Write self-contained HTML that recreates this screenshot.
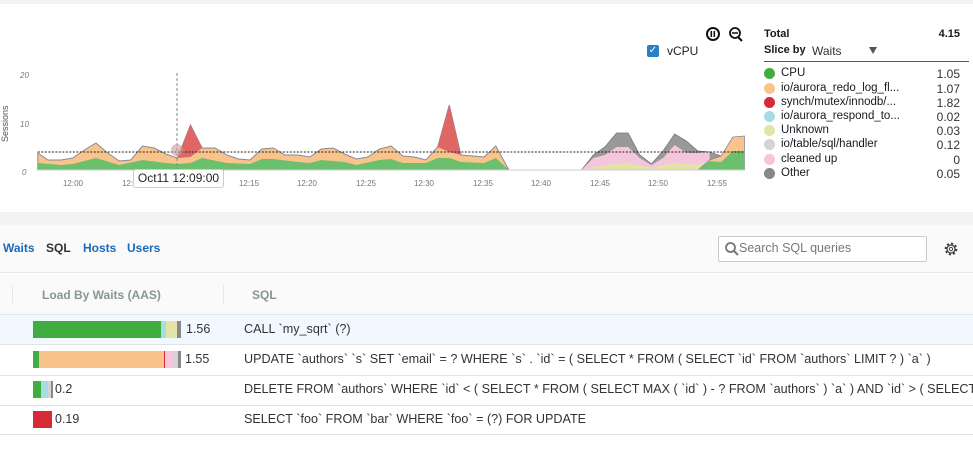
<!DOCTYPE html>
<html><head><meta charset="utf-8"><style>
*{margin:0;padding:0;box-sizing:border-box}
body{width:973px;height:455px;overflow:hidden;background:#fff;font-family:"Liberation Sans",sans-serif;position:relative;color:#16191f}
.a{position:absolute;white-space:nowrap}
.lg{font-size:11.5px;color:#16191f}
.dot{position:absolute;width:11px;height:11px;border-radius:50%;left:764px}
.v{right:13px;text-align:right;font-size:12px;color:#333}
.row{position:absolute;left:0;width:973px;border-bottom:1px solid #e2e4e4}
.bar{position:absolute;height:17px;display:flex}
.bar span{height:17px;display:block}
.num{font-size:12.5px;color:#333}
.sql{position:absolute;left:244px;font-size:12.6px;color:#333;white-space:nowrap;overflow:hidden;width:729px}
</style></head><body>
<div class="a" style="left:0;top:0;width:973px;height:4px;background:#f2f3f3"></div>
<svg class="a" style="left:0;top:0" width="760" height="200">
<g font-size="8" fill="#777" font-family="Liberation Sans">
<text x="20" y="78" font-style="italic">20</text>
<text x="20" y="127" font-style="italic">10</text>
<text x="22" y="175" font-style="italic">0</text>
<text x="8" y="142" transform="rotate(-90 8 142)" font-size="9" fill="#555">Sessions</text>
<g text-anchor="middle">
<text x="73" y="186">12:00</text><text x="132" y="186">12:05</text><text x="249" y="186">12:15</text><text x="307" y="186">12:20</text><text x="366" y="186">12:25</text><text x="424" y="186">12:30</text><text x="483" y="186">12:35</text><text x="541" y="186">12:40</text><text x="600" y="186">12:45</text><text x="658" y="186">12:50</text><text x="717" y="186">12:55</text>
</g>
</g>
<g transform="scale(1.454,1)">
<polygon fill="#f9c48c" stroke="#889" stroke-width="1" vector-effect="non-scaling-stroke" points="26,153 33,160 42,160 50,158 58,150 66,143 74,153 82,161 90,160 98,146 106,148 114,154 122,158 131,125 139,148 148,148 156,155 164,159 172,160 180,149 188,148 196,155 205,155 213,157 221,149 229,148 237,154 245,159 253,157 261,149 269,146 277,156 285,157 293,160 301,147 309,105 317,155 325,156 333,157 341,146 350,170 26,170"/>
<polygon fill="#e06666" points="122,158 131,125 139,148 131,157"/>
<polygon fill="#e06666" points="301,147 309,105 317,155 309,152"/>
<polygon fill="#6cbf6c" points="26,163 42,165 50,164 66,158 82,165 98,160 114,163 122,164 131,163 139,158 156,163 172,164 180,159 188,159 205,162 213,163 221,160 237,162 245,165 261,160 269,159 277,163 293,163 301,158 309,158 317,162 333,163 341,158 350,170 26,170"/>
<line x1="350" y1="170" x2="400" y2="170" stroke="#8899cc" stroke-width="1" vector-effect="non-scaling-stroke"/>
<polygon fill="#999" stroke="#777" stroke-width="0.8" vector-effect="non-scaling-stroke" points="400,170 408,155 416,147 424,133 432,133 440,155 448,164 456,151 464,134 472,141 480,151 488,152 496,156 496,170"/>
<polygon fill="#f4c6dc" points="400,170 408,158 416,155 424,147 432,147 440,158 448,165 456,158 464,145 472,153 480,153 488,152 488,170"/>
<polygon fill="#e4e4a8" points="400,170 416,165 432,163 448,168 464,163 480,165 488,160 488,170"/>
<polygon fill="#f9c48c" stroke="#889" stroke-width="0.8" vector-effect="non-scaling-stroke" points="480,170 488,160 496,156 504,137 512,136 512,170"/>
<polygon fill="#6cbf6c" points="480,170 488,161 496,162 504,151 512,151 512,170"/>
<line x1="26" y1="170" x2="512" y2="170" stroke="#ccd" stroke-width="1" vector-effect="non-scaling-stroke"/>
<line x1="26" y1="152" x2="512" y2="152" stroke="#222" stroke-dasharray="2,1.5" stroke-width="1" vector-effect="non-scaling-stroke"/>
</g>
<line x1="177" y1="73" x2="177" y2="170" stroke="#888" stroke-dasharray="3,2" stroke-width="1"/>
<circle cx="177" cy="150" r="6" fill="#c99" opacity="0.6"/>
<circle cx="713" cy="34" r="6" fill="none" stroke="#111" stroke-width="2"/><rect x="710.5" y="31" width="1.6" height="6" fill="#111"/><rect x="713.5" y="31" width="1.6" height="6" fill="#111"/>
<circle cx="735" cy="33" r="5" fill="none" stroke="#111" stroke-width="1.8"/><line x1="738" y1="37" x2="742" y2="41" stroke="#111" stroke-width="2"/><line x1="732" y1="33" x2="738" y2="33" stroke="#111" stroke-width="1.5"/>
</svg>
<div class="a" style="left:133px;top:169px;width:91px;height:19px;background:#fff;border:1px solid #ccc;border-radius:3px;font-size:12px;line-height:17px;text-align:center;color:#222">Oct11 12:09:00</div>
<div class="a" style="left:647px;top:45px;width:12px;height:12px;background:#2a7fc5;border-radius:2px;color:#fff;font-size:10px;line-height:12px;text-align:center">✓</div>
<div class="a" style="left:667px;top:44px;font-size:12px;color:#222">vCPU</div>
<div class="a lg" style="left:764px;top:28px;font-weight:bold;font-size:11px">Total</div>
<div class="a" style="right:13px;top:28px;font-weight:bold;font-size:11px">4.15</div>
<div class="a lg" style="left:764px;top:44px;font-weight:bold;font-size:11px">Slice by</div>
<div class="a" style="left:812px;top:44px;font-size:12px;color:#333">Waits</div>
<div class="a" style="left:869px;top:47px;width:0;height:0;border-left:4px solid transparent;border-right:4px solid transparent;border-top:7px solid #555"></div>
<div class="a" style="left:764px;top:61px;width:205px;height:1px;background:#555"></div>
<div class="dot" style="top:68px;background:#3fad3f"></div><div class="a lg" style="left:781px;top:67px">CPU</div><div class="a v" style="top:67px">1.05</div>
<div class="dot" style="top:83px;background:#f9c48c"></div><div class="a lg" style="left:781px;top:82px">io/aurora_redo_log_fl...</div><div class="a v" style="top:82px">1.07</div>
<div class="dot" style="top:97px;background:#d62a36"></div><div class="a lg" style="left:781px;top:96px">synch/mutex/innodb/...</div><div class="a v" style="top:96px">1.82</div>
<div class="dot" style="top:111px;background:#a8dce4"></div><div class="a lg" style="left:781px;top:110px">io/aurora_respond_to...</div><div class="a v" style="top:110px">0.02</div>
<div class="dot" style="top:125px;background:#e2e4a8"></div><div class="a lg" style="left:781px;top:124px">Unknown</div><div class="a v" style="top:124px">0.03</div>
<div class="dot" style="top:139px;background:#d4d4d4"></div><div class="a lg" style="left:781px;top:138px">io/table/sql/handler</div><div class="a v" style="top:138px">0.12</div>
<div class="dot" style="top:154px;background:#f4c6dc"></div><div class="a lg" style="left:781px;top:153px">cleaned up</div><div class="a v" style="top:153px">0</div>
<div class="dot" style="top:168px;background:#888"></div><div class="a lg" style="left:781px;top:167px">Other</div><div class="a v" style="top:167px">0.05</div>

<div class="a" style="left:0;top:212px;width:973px;height:13px;background:#f2f3f3"></div>
<div class="a" style="left:0;top:225px;width:973px;height:48px;background:#fafafa;border-bottom:1px solid #e5e7e7"></div>
<div class="a" style="left:3px;top:241px;font-size:12px;font-weight:bold;color:#1b6ab8">Waits</div>
<div class="a" style="left:46px;top:241px;font-size:12px;font-weight:bold;color:#333">SQL</div>
<div class="a" style="left:83px;top:241px;font-size:12px;font-weight:bold;color:#1b6ab8">Hosts</div>
<div class="a" style="left:127px;top:241px;font-size:12px;font-weight:bold;color:#1b6ab8">Users</div>
<div class="a" style="left:718px;top:236px;width:209px;height:26px;border:1px solid #c8cbcb;border-radius:2px;background:#fff"></div>
<svg class="a" style="left:724px;top:241px" width="16" height="16"><circle cx="6.5" cy="6.5" r="4.5" fill="none" stroke="#777" stroke-width="1.8"/><line x1="10" y1="10" x2="14" y2="14" stroke="#777" stroke-width="2"/></svg>
<div class="a" style="left:739px;top:241px;font-size:12.5px;color:#777">Search SQL queries</div>
<svg class="a" style="left:943px;top:241px" width="16" height="16"><circle cx="8" cy="8" r="5" fill="none" stroke="#444" stroke-width="2.8" stroke-dasharray="2,1.9"/><circle cx="8" cy="8" r="4" fill="none" stroke="#444" stroke-width="1.3"/><circle cx="8" cy="8" r="1.6" fill="none" stroke="#444" stroke-width="1"/></svg>
<div class="a" style="left:0;top:274px;width:973px;height:41px;background:#fafafa;border-bottom:1px solid #e5e7e7"></div>
<div class="a" style="left:12px;top:285px;width:1px;height:18px;background:#e5e7e7"></div>
<div class="a" style="left:223px;top:285px;width:1px;height:18px;background:#e5e7e7"></div>
<div class="a" style="left:42px;top:288px;font-size:12px;font-weight:bold;color:#879596">Load By Waits (AAS)</div>
<div class="a" style="left:252px;top:288px;font-size:12px;font-weight:bold;color:#879596">SQL</div>

<div class="row" style="top:315px;height:30px;background:#f1f8ff"></div>
<div class="bar" style="left:33px;top:321px"><span style="width:128px;background:#3fad3f"></span><span style="width:5px;background:#a8dce4"></span><span style="width:11px;background:#e2e4a8"></span><span style="width:4px;background:#888"></span></div>
<div class="a num" style="left:186px;top:322px">1.56</div>
<div class="sql" style="top:322px">CALL `my_sqrt` (?)</div>

<div class="row" style="top:345px;height:31px"></div>
<div class="bar" style="left:33px;top:351px"><span style="width:6px;background:#3fad3f"></span><span style="width:125px;background:#f9c48c"></span><span style="width:1px;background:#d62a36"></span><span style="width:9px;background:#f4c6dc"></span><span style="width:4px;background:#d4d4d4"></span><span style="width:3px;background:#888"></span></div>
<div class="a num" style="left:185px;top:352px">1.55</div>
<div class="sql" style="top:352px">UPDATE `authors` `s` SET `email` = ? WHERE `s` . `id` = ( SELECT * FROM ( SELECT `id` FROM `authors` LIMIT ? ) `a` )</div>

<div class="row" style="top:376px;height:30px"></div>
<div class="bar" style="left:33px;top:381px"><span style="width:8px;background:#3fad3f"></span><span style="width:7px;background:#a8dce4"></span><span style="width:3px;background:#d4d4d4"></span><span style="width:2px;background:#888"></span></div>
<div class="a num" style="left:55px;top:382px">0.2</div>
<div class="sql" style="top:382px">DELETE FROM `authors` WHERE `id` &lt; ( SELECT * FROM ( SELECT MAX ( `id` ) - ? FROM `authors` ) `a` ) AND `id` &gt; ( SELECT * FRO...</div>

<div class="row" style="top:406px;height:29px"></div>
<div class="bar" style="left:33px;top:411px"><span style="width:19px;background:#d62a36"></span></div>
<div class="a num" style="left:55px;top:412px">0.19</div>
<div class="sql" style="top:412px">SELECT `foo` FROM `bar` WHERE `foo` = (?) FOR UPDATE</div>
</body></html>
